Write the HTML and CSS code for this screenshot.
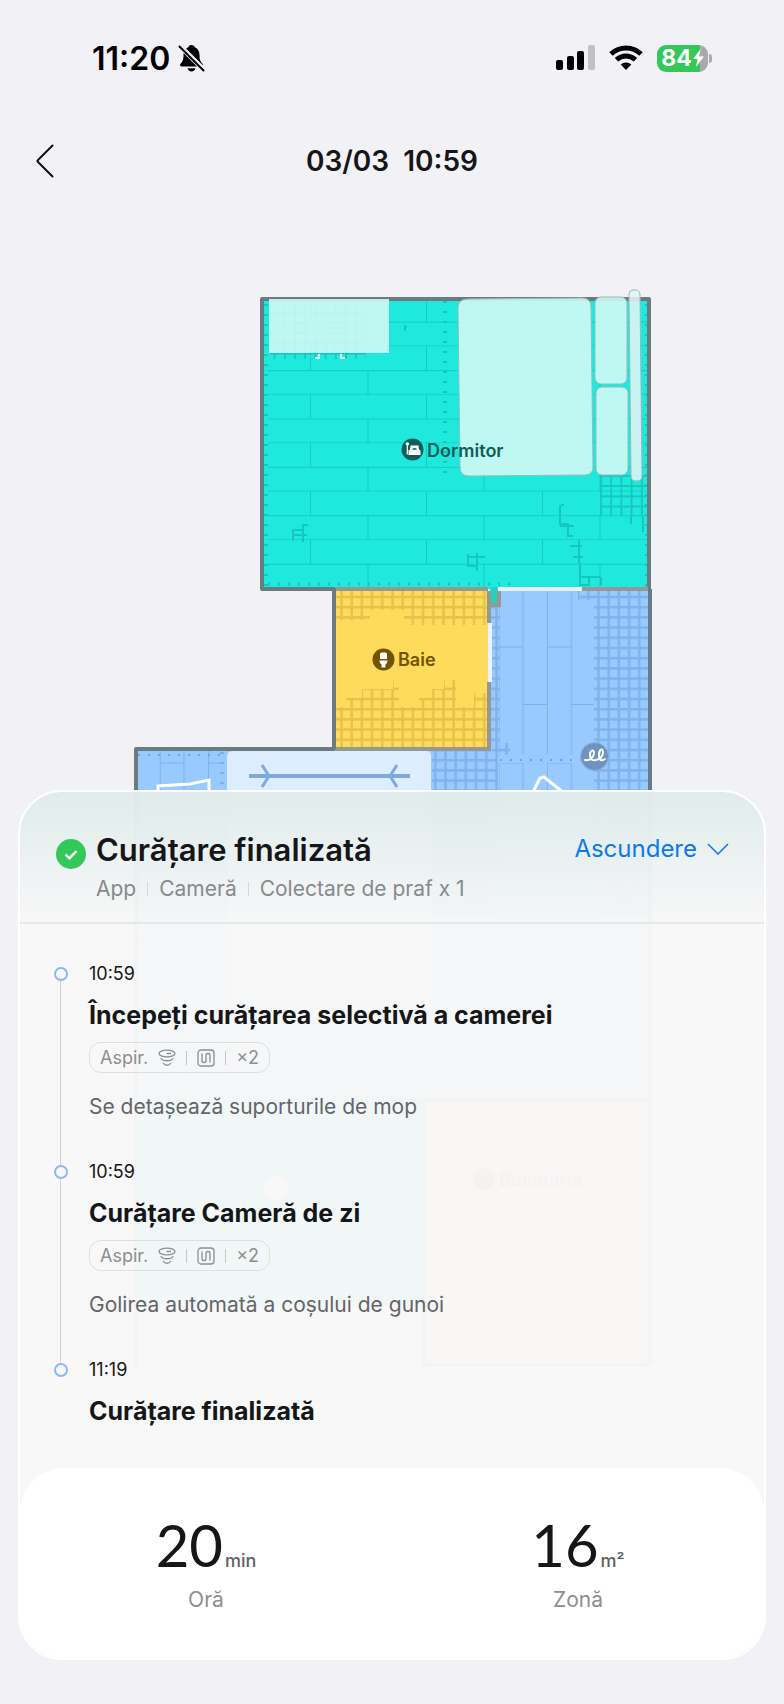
FILE: index.html
```html
<!DOCTYPE html>
<html lang="ro">
<head>
  <meta charset="UTF-8" />
  <meta name="viewport" content="width=device-width, initial-scale=1.0"/>
  <title>Curățare finalizată</title>
  <link rel="stylesheet" href="styles.css">
</head>
<body>
  <div class="status-bar">
    <div class="status-left">
      <span class="clock">11:20</span>
      <svg width="27" height="28" viewBox="0 0 27 28">
        <path d="M13.500 1c-2 0-3 1-3.300 2.300C7 4.500 5.500 7.500 5.500 11c0 5-1 6.500-3 8.800-.9 1.200-.3 2.700 1.200 2.700h19.600c1.500 0 2.100-1.500 1.200-2.700-2-2.300-3-3.800-3-8.800 0-3.500-1.500-6.500-4.700-7.700C16.500 2 15.500 1 13.500 1z"/>
        <path d="M9.500 24.300h8c-.4 1.900-2 3.200-4 3.200s-3.600-1.300-4-3.200z"/>
        <path d="M1.500 1.500l25 25" stroke="#f2f1f6" stroke-width="5"/>
        <path d="M1.500 2.500l24 24" stroke="#000" stroke-width="2" stroke-linecap="round"/>
      </svg>
    </div>
    <div class="status-right">
      <svg width="39" height="26" viewBox="0 0 39 26">
        <rect x="0" y="15" width="7" height="10" rx="2"/>
        <rect x="11" y="11" width="7" height="14" rx="2"/>
        <rect x="21" y="6" width="7" height="19" rx="2"/>
        <rect x="32" y="0" width="7" height="25" rx="2" fill="#c0c0c5"/>
      </svg>
      <svg width="34" height="26" viewBox="0 0 34 26">
        <g fill="none" stroke="#000" stroke-width="5">
          <path d="M2 9c8.500-8 21.500-8 30 0"/>
          <path d="M7.500 14.800c5.500-5.200 13.500-5.200 19 0"/>
        </g>
        <path d="M17 25l-5.300-5.400c3-2.700 7.600-2.700 10.600 0z"/>
      </svg>
      <div class="battery">
        <span>84</span>
        <svg width="11" height="18" viewBox="0 0 11 18"><path d="M7.500 0L0 10h4.500L3 18l8-10.500H6.300z" fill="#fff"/></svg>
      </div>
    </div>
  </div>

  <header class="nav">
    <button class="back" aria-label="Înapoi">
      <svg width="18" height="34" viewBox="0 0 18 34"><path d="M16.500 1.500L2 16q-1 1 0 2l14.500 14.500" fill="none" stroke="#111" stroke-width="2" stroke-linecap="round"/></svg>
    </button>
    <h1>03/03&nbsp; 10:59</h1>
  </header>

  <main class="stage">
    <svg class="map" viewBox="0 200 784 1200">
      <defs>
        <pattern id="planks" x="310" y="298" width="116" height="48.400" patternUnits="userSpaceOnUse">
          <path d="M0 24.200H116M0 48.200H116M.5 0V24.200M58 24.200V48.400" fill="none" stroke="#16cbc2" stroke-width="1"/>
        </pattern>
        <pattern id="planks-v" x="498.500" y="589" width="48.400" height="116" patternUnits="userSpaceOnUse">
          <path d="M.5 0V116M24.500 0V116M0 58H24.200M24.200 115.500H48.400" fill="none" stroke="#7fb0ea" stroke-width="1"/>
        </pattern>
        <pattern id="tiles-teal" x="600" y="475" width="10.200" height="10.200" patternUnits="userSpaceOnUse">
          <path d="M0 1H10.200M1 0V10.200" stroke="#15c7bd" stroke-width="1.800"/>
        </pattern>
        <pattern id="tiles-yellow" x="340" y="592" width="10.200" height="10.200" patternUnits="userSpaceOnUse">
          <path d="M0 5H10.200M1.500 0V10.200" stroke="#e6c24c" stroke-width="2.400"/>
        </pattern>
        <pattern id="tiles-blue" x="597" y="592" width="10.200" height="10.200" patternUnits="userSpaceOnUse">
          <path d="M0 5H10.200M1.500 0V10.200" stroke="#82b2ea" stroke-width="2.400"/>
        </pattern>
      </defs>

      <!-- hallway and living room -->
      <path d="M490 590H649V1100H136V750H490z" fill="#98c9ff"/>
      <path d="M499 590H594V755H499zM499 763H594V1100H499zM138 751H222V1100H138z" fill="url(#planks-v)"/>
      <path d="M490 605h10v142h-10zM578 590h70v510h-54V600h-16zM432 751h60v-8h18v12h-12v345h-66z" fill="url(#tiles-blue)"/>
      <path d="M138 755H227M500 760H594" stroke="#6fa2de" stroke-width="2" stroke-dasharray="2 8"/>
      <path d="M222 752V1100" stroke="#7eaee6" stroke-width="4" stroke-dasharray="2 8"/>

      <!-- rooms at the bottom -->
      <path d="M136 1100H424V1307H136z" fill="#1fe8dd"/>
      <path d="M424 1100H649V1365H424z" fill="#ffc9b0" stroke="#6b7c80" stroke-width="3"/>
      <circle cx="276" cy="1188" r="12" fill="#fff"/>
      <circle cx="484" cy="1179" r="11" fill="#7a4a30"/>
      <text class="room" x="499" y="1186" fill="#7a4a30">Bucătărie</text>

      <!-- bedroom -->
      <path d="M262 299H650V589H500V604H490V589H262z" fill="#1fe8dd"/>
      <path d="M268 301H648V587H268z" fill="url(#planks)"/>
      <path d="M600 475h50v41h-50zM270 301h96v58h-96z" fill="url(#tiles-teal)"/>
      <path d="M266 304V586M445 301V475M647 304V586" stroke="#15c7bd" stroke-width="4" stroke-dasharray="2 8"/>
      <path d="M268 584H510" stroke="#15c7bd" stroke-width="3" stroke-dasharray="2 8"/>
      <path d="M293 541v-11h10v-5h5M293 535h14M303 525v17M468 554v12h9M467 557h18M477 553v18M561 505h3M560 505v19h8v12M560 526h14M568 530v6h5M570 546h12M579 540v23M573 557h10M580 563v14h20M580 577v8h9v-8M601 577v8M631 516v8M643 516v16M405 325v6M404 327h3" fill="none" stroke="#15c7bd" stroke-width="2"/>

      <!-- walls -->
      <path d="M649 591V299H262V589H334V749H136V1365" fill="none" stroke="#6b7c80" stroke-width="4" stroke-linejoin="round"/>
      <path d="M650 589V1365" stroke="#65798f" stroke-width="4"/>

      <!-- bathroom -->
      <path d="M336 591h152v157h-152z" fill="#ffdb5c"/>
      <path d="M336 591h152v34h-84v-15h-34v10h-34zM336 707h10v-9h16v-9h31v-9h6v27h20v-9h13v-9h12v-9h12v27h18v-14h14v55H336z" fill="url(#tiles-yellow)"/>
      <path d="M336 589H488M581 589H648M489 591V623M489 682V748M336 749H491M499 590V605H490" fill="none" stroke="#969993" stroke-width="4"/>
      <path d="M491 587h6v16h-6z" fill="#1fd5bc"/>
      <path d="M498 589H582M490 623V682" stroke="#e8f2ff" stroke-width="4"/>

      <!-- furniture -->
      <path d="M269 299H389V353H269z" fill="#dafaf7" fill-opacity=".86"/>
      <path d="M315 358h4v-4M345 358h-4v-4" fill="none" stroke="#e6fffd" stroke-width="2"/>
      <g fill="#dafaf7" fill-opacity=".86" stroke="#93bdbb" stroke-width="1">
        <path d="M468 299l114-1q9 0 9 9l2 160q0 8-8 8l-116 1q-9 0-9-9l-2-159q0-9 10-9z"/>
        <rect x="595" y="297" width="32" height="87" rx="6"/>
        <rect x="596" y="387" width="32" height="88" rx="6"/>
        <path d="M629 294q0-4 4-4h2q5 0 5 5l2 181q0 5-5 5h-1q-5 0-5-5z" fill="#e6f3f4"/>
      </g>
      <path d="M233 751H426q5 0 5 5V1000H227V757q0-6 6-6z" fill="#ebf4ff" fill-opacity=".84"/>
      <path d="M249 776H410" stroke="#7fa9dc" stroke-width="4"/>
      <path d="M262 765l7 11-7 11M397 765l-7 11 7 11" fill="none" stroke="#7fa9dc" stroke-width="3"/>
      <path d="M158 800V786l32-2 19-4v20M533 792l7-14 4-1 20 16" fill="none" stroke="#fff" stroke-width="3"/>

      <!-- labels -->
      <circle cx="412.500" cy="449.500" r="11" fill="#0d5e58"/>
      <path d="M405.500 444a1.800 1.800 0 1 1 2.400 1.700v8.800h-1.200v-8.800z" fill="#fff"/>
      <path d="M410.500 445.500h8l.5 4 1.500 1v4.500h-12v-4.500l1.500-1z" fill="#fff"/>
      <path d="M412.500 449h4" stroke="#0d5e58" stroke-width="1.500"/>
      <text class="room" x="427" y="457" fill="#0d5e58">Dormitor</text>
      <circle cx="383.500" cy="659.500" r="11" fill="#735300"/>
      <path d="M381.500 652.500h4q1.500 0 1.500 2v4.500h-7v-4.500q0-2 1.500-2zM379.500 660.500h8q0 3-2 4v3h-4v-3q-2-1-2-4z" fill="#fff"/>
      <text class="room" x="398" y="666" fill="#735300">Baie</text>
      <circle cx="594.500" cy="756.500" r="14" fill="#6e93c0" stroke="#8fb3da" stroke-width="1"/>
      <path d="M585 760c5 1 9-3 9-7s-4-3-4 2 3 6 6 5c4-1 7-4 7-8s-4-3-4 3 3 6 6 4" fill="none" stroke="#fff" stroke-width="2" stroke-linecap="round"/>
    </svg>

    <section class="sheet">
      <div class="sheet-head">
        <svg class="done" width="30" height="30" viewBox="0 0 30 30">
          <circle cx="15" cy="15" r="15" fill="#34c759"/>
          <path d="M9.500 15.500l4 3.800 7-7.300" fill="none" stroke="#fff" stroke-width="2.500"/>
        </svg>
        <div class="summary">
          <h2>Curățare finalizată</h2>
          <p class="tags"><span>App</span><span>Cameră</span><span>Colectare de praf x 1</span></p>
        </div>
        <button class="toggle">
          Ascundere
          <svg width="22" height="12" viewBox="0 0 22 12"><path d="M1 1l10 10L21 1" fill="none" stroke="currentColor" stroke-width="1.500"/></svg>
        </button>
      </div>

      <ol class="timeline">
        <li>
          <time>10:59</time>
          <h3>Începeți curățarea selectivă a camerei</h3>
          <div class="mode">
            <span>Aspir.</span>
            <svg width="18" height="18" viewBox="0 0 18 18"><use href="#fan"/></svg>
            <i></i>
            <svg width="18" height="18" viewBox="0 0 18 18"><use href="#route"/></svg>
            <i></i>
            <span>×2</span>
          </div>
          <p>Se detașează suporturile de mop</p>
        </li>
        <li>
          <time>10:59</time>
          <h3>Curățare Cameră de zi</h3>
          <div class="mode">
            <span>Aspir.</span>
            <svg width="18" height="18" viewBox="0 0 18 18">
              <g id="fan" fill="none" stroke="#8d8e90" stroke-width="1.300" stroke-linecap="round">
                <ellipse cx="9" cy="4.500" rx="8" ry="3.300"/>
                <path d="M12.500 4.500H9M3 9.500c2 3 10 3 12 0M5.500 14.500c1.500 2.300 5.500 2.300 7 0"/>
              </g>
            </svg>
            <i></i>
            <svg width="18" height="18" viewBox="0 0 18 18">
              <g id="route" fill="none" stroke="#8d8e90" stroke-width="1.300" stroke-linecap="round">
                <rect x="1" y="1" width="16" height="16" rx="3"/>
                <path d="M5 5v6.500q0 2 2 2t2-2v-5q0-2 2-2t2 2V13"/>
              </g>
            </svg>
            <i></i>
            <span>×2</span>
          </div>
          <p>Golirea automată a coșului de gunoi</p>
        </li>
        <li>
          <time>11:19</time>
          <h3>Curățare finalizată</h3>
        </li>
      </ol>

      <div class="stats">
        <div class="stat">
          <div class="value">20<small>min</small></div>
          <div class="label">Oră</div>
        </div>
        <div class="stat">
          <div class="value">16<small>m²</small></div>
          <div class="label">Zonă</div>
        </div>
      </div>
    </section>
  </main>
</body>
</html>
```
FILE: styles.css
```css
*,
*::before,
*::after {
  box-sizing: border-box;
}

body {
  margin: 0;
  background-color: #f2f1f6;
  color: #151617;
  font-family: Inter, "Liberation Sans", sans-serif;
}

h1, h2, h3, p, ol {
  margin: 0;
  padding: 0;
}

button {
  border: none;
  background: none;
  padding: 0;
  font-family: inherit;
  cursor: pointer;
}

svg {
  display: block;
}

.status-bar {
  display: flex;
  justify-content: space-between;
  align-items: center;
  height: 116px;
  padding: 0 71px 0 92px;
}

.status-left,
.status-right {
  display: flex;
  align-items: center;
}

.status-left {
  gap: 8px;
}

.status-right {
  gap: 14px;
}

.clock {
  font-size: 32px;
  font-weight: 600;
  color: #000;
}

.battery {
  position: relative;
  display: flex;
  align-items: center;
  justify-content: center;
  gap: 1px;
  width: 51px;
  height: 27px;
  margin-right: 5px;
  border-radius: 9px;
  background: linear-gradient(to right, #34c759 84%, #a9a9ae 84%);
  color: #fff;
  font-size: 23px;
  font-weight: 700;
}

.battery::after {
  content: "";
  position: absolute;
  right: -4px;
  width: 3px;
  height: 9px;
  border-radius: 0 3px 3px 0;
  background-color: #a9a9ae;
}

.nav {
  display: grid;
  grid-template-columns: 60px 1fr 60px;
  align-items: center;
  height: 84px;
  padding-top: 6px;
}

.back {
  display: flex;
  justify-content: flex-end;
  padding-right: 6px;
}

.nav h1 {
  text-align: center;
  font-size: 28px;
  font-weight: 600;
}

/* the sheet lies over the lower part of the map */
.stage {
  display: grid;
}

.map {
  grid-area: 1 / 1;
  width: 100%;
}

.room {
  font-size: 18px;
  font-weight: 600;
}

.sheet {
  grid-area: 1 / 1;
  align-self: start;
  position: relative;
  margin: 590px 18px 43px;
  border: 2px solid #fff;
  border-radius: 44px;
  background: linear-gradient(to bottom, rgba(224, 235, 235, 0.98), rgba(248, 248, 248, 0.97) 134px);
}

.sheet-head {
  display: flex;
  align-items: flex-start;
  height: 132px;
  padding: 36px 35px 0 36px;
  border-bottom: 2px solid #e6e7e8;
}

.done {
  flex: none;
  margin: 11px 10px 0 0;
}

.summary {
  flex: 1;
}

.summary h2 {
  font-size: 31px;
  line-height: 44px;
  font-weight: 600;
}

.tags {
  display: flex;
  align-items: center;
  line-height: 34px;
  font-size: 21px;
  color: #88898c;
}

.tags span + span::before {
  content: "";
  display: inline-block;
  width: 1px;
  height: 14px;
  margin: 0 11px;
  background-color: #d5d8da;
}

.toggle {
  display: flex;
  align-items: center;
  gap: 10px;
  color: #0a7aee;
  font-size: 24px;
  line-height: 42px;
}

.timeline {
  list-style: none;
  padding: 36px 34px 46px;
}

.timeline li {
  position: relative;
  height: 198px;
  padding-left: 35px;
}

.timeline li:last-child {
  height: 66px;
}

.timeline li::before {
  content: "";
  position: absolute;
  left: 0;
  top: 7px;
  width: 14px;
  height: 14px;
  border: 2px solid #91b5f7;
  border-radius: 50%;
}

.timeline li:not(:last-child)::after {
  content: "";
  position: absolute;
  left: 6px;
  top: 21px;
  bottom: -7px;
  width: 1px;
  background-color: #cfd0d3;
}

.timeline time {
  display: block;
  font-size: 18px;
  line-height: 28px;
}

.timeline h3 {
  margin-top: 10px;
  font-size: 25px;
  line-height: 34px;
  font-weight: 700;
}

.timeline p {
  margin-top: 18px;
  font-size: 21px;
  line-height: 32px;
  color: #646568;
}

.mode {
  display: inline-flex;
  align-items: center;
  gap: 10px;
  height: 31px;
  margin-top: 10px;
  padding: 0 10px;
  border: 1px solid #dedfe1;
  border-radius: 12px;
  font-size: 18px;
  color: #8d8e90;
}

.mode i {
  width: 1px;
  height: 14px;
  background-color: #c5c6c8;
}

.stats {
  display: grid;
  grid-template-columns: 1fr 1fr;
  padding: 44px 0;
  border-radius: 44px;
  background-color: #fff;
  text-align: center;
}

.value {
  font-family: Lato, sans-serif;
  font-size: 58px;
  line-height: 66px;
}

.value small {
  margin-left: 2px;
  font-family: Inter, sans-serif;
  font-size: 18px;
  line-height: 18px;
  font-weight: 500;
  color: #5f6063;
}

.label {
  margin-top: 8px;
  font-size: 21px;
  line-height: 28px;
  color: #8d8e90;
}
```
